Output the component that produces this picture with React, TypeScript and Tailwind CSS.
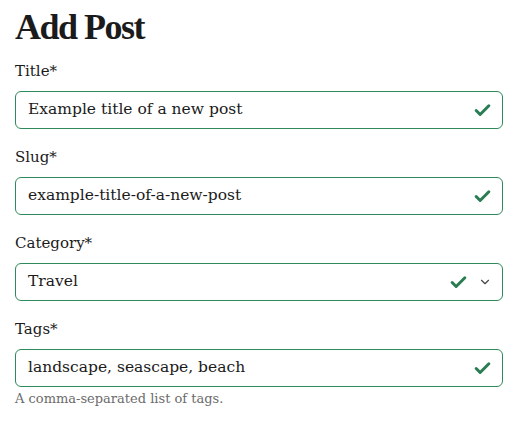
import { Check, ChevronDown } from 'lucide-react'

const fields = [
  { label: 'Title*', value: 'Example title of a new post' },
  { label: 'Slug*', value: 'example-title-of-a-new-post' },
  { label: 'Category*', value: 'Travel', select: true },
  { label: 'Tags*', value: 'landscape, seascape, beach', help: 'A comma-separated list of tags.' },
] as const

export default function App() {
  return (
    <div className="min-h-screen bg-white px-[15px] pt-[5px] text-[#1b1b1b] [font-family:'DejaVu_Serif',serif]">
      <h1 className="text-[36px] leading-[44px] font-bold tracking-[-1.5px] [font-family:'Liberation_Serif',serif]">
        Add Post
      </h1>
      <form className="mt-[12px] w-[488px]">
        {fields.map((f) => (
          <div key={f.label} className="mb-[18px]">
            <label className="block text-[15px] leading-[20px]">{f.label}</label>
            <div className="mt-[10px] flex h-[38px] items-center rounded-[6px] border border-[#2f8a5b] pl-[12px] pr-[10px]">
              <span className="flex-1 text-[15.5px] text-[#1b1b1b]">{f.value}</span>
              <Check className="h-[19px] w-[19px] text-[#2a7d52]" strokeWidth={3.8} />
              {'select' in f && <ChevronDown className="ml-[10px] h-[14px] w-[14px] text-[#444]" strokeWidth={2} />}
            </div>
            {'help' in f && (
              <p className="mt-[3px] text-[13px] leading-[18px] text-[#6b6b6b]">{f.help}</p>
            )}
          </div>
        ))}
      </form>
    </div>
  )
}
